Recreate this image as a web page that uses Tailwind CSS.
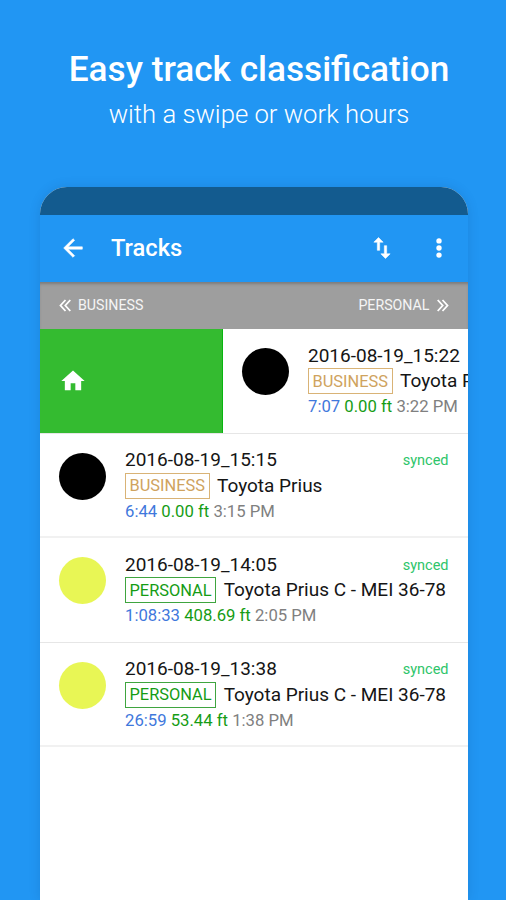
<!DOCTYPE html>
<html lang="en">
<head>
<meta charset="utf-8">
<title>Tracks</title>
<script src="https://cdn.jsdelivr.net/npm/@tailwindcss/browser@4"></script>
</head>
<body class="h-[900px] w-[506px] overflow-hidden bg-[#2196f3] font-['Roboto',sans-serif] whitespace-nowrap">
<header class="flex h-[187px] flex-col items-center pt-[47px] pl-[12px] text-white">
  <h1 class="text-[35.2px] leading-[44px] font-medium">Easy track classification</h1>
  <p class="mt-[7px] text-[25.7px] leading-[32px] font-light">with a swipe or work hours</p>
</header>
<main class="ml-[40px] flex h-[713px] w-[427.5px] flex-col overflow-hidden rounded-t-[27px] bg-white shadow-[0_0_12px_rgba(0,40,90,0.14)]">
  <div class="h-[28px] shrink-0 bg-[#135b8f]"></div>
  <div class="flex h-[67px] shrink-0 items-center bg-[#2196f3] pr-[15px] pl-[19px] text-white">
    <svg class="mb-[2px] size-[28px]" viewBox="0 0 24 24" fill="currentColor" stroke="currentColor" stroke-width="0.5"><path d="M20 11H7.83l5.59-5.59L12 4l-8 8 8 8 1.41-1.41L7.83 13H20v-2z"/></svg>
    <h2 class="ml-[24px] text-[23.7px] font-medium">Tracks</h2>
    <svg class="mb-px ml-auto h-[28px] w-[28px]" viewBox="0 0 24 24" fill="currentColor" stroke="currentColor" stroke-width="0.5"><path d="M16 17.01V10h-2v7.01h-3L15 21l4-3.99h-3zM9 3L5 6.99h3V14h2V6.99h3L9 3z"/></svg>
    <svg class="mb-[2px] ml-[29px] size-[28px]" viewBox="0 0 24 24" fill="currentColor"><circle cx="12" cy="5.9" r="2.3"/><circle cx="12" cy="12" r="2.3"/><circle cx="12" cy="18.1" r="2.3"/></svg>
  </div>
  <div class="flex h-[47px] shrink-0 items-center justify-between bg-[#9e9e9e] pt-px pr-[19px] pl-[19px] text-[14.2px] text-white/90 shadow-[inset_0_3px_3px_-1px_rgba(0,0,0,0.22)]">
    <span class="flex items-center gap-[7px]"><svg class="h-[13px] w-[12px]" viewBox="0 0 12 13" fill="none" stroke="white" stroke-width="1.8"><path d="M6.5 1 1.5 6.5l5 5.5M11.3 1l-5 5.5 5 5.5"/></svg>BUSINESS</span>
    <span class="flex items-center gap-[7px]">PERSONAL<svg class="h-[13px] w-[12px]" viewBox="0 0 12 13" fill="none" stroke="white" stroke-width="1.8"><path d="m.7 1 5 5.5-5 5.5M5.5 1l5 5.5-5 5.5"/></svg></span>
  </div>
  <section class="flex h-[104.5px] shrink-0 overflow-hidden border-b-[1.5px] border-[#e6e6e6]">
    <div class="flex w-[182.5px] shrink-0 items-center border-r border-[#08b510] bg-[#34bb30] pl-[19px] text-white"><svg class="size-[28px]" viewBox="0 0 24 24" fill="currentColor"><path d="M10 20v-6h4v6h5v-8h3L12 3 2 12h3v8z"/></svg></div>
    <div class="flex w-[427.5px] shrink-0 pt-[13.5px] pl-[19.5px]">
      <div class="mt-[5.5px] size-[47px] rounded-full bg-black"></div>
      <div class="ml-[19px] text-[19px] leading-[25.5px] text-[#151515]">
        <p>2016-08-19_15:22</p>
        <p class="flex items-center"><span class="flex h-[26px] items-center border-[1.5px] border-[#d9b376] px-[3.5px] pt-px text-[16.4px] text-[#cfa35e]">BUSINESS</span><span class="ml-[7.5px]">Toyota Prius</span></p>
        <p class="text-[16.7px] text-[#808080]"><span class="text-[#3f78dc]">7:07</span> <span class="text-[#159c15]">0.00 ft</span> 3:22 PM</p>
      </div>
    </div>
  </section>
  <section class="flex h-[104.5px] shrink-0 border-b-2 border-[#f1f1f1] pt-[13.5px] pr-[19px] pl-[19px]">
    <div class="mt-[5.5px] size-[47px] rounded-full bg-black"></div>
    <div class="ml-[19px] text-[19px] leading-[25.5px] text-[#151515]">
      <p>2016-08-19_15:15</p>
      <p class="flex items-center"><span class="flex h-[26px] items-center border-[1.5px] border-[#d9b376] px-[3.5px] pt-px text-[16.4px] text-[#cfa35e]">BUSINESS</span><span class="ml-[7.5px]">Toyota Prius</span></p>
      <p class="text-[16.7px] text-[#808080]"><span class="text-[#3f78dc]">6:44</span> <span class="text-[#159c15]">0.00 ft</span> 3:15 PM</p>
    </div>
    <span class="ml-auto w-0 text-[14.5px] leading-[27px] text-[#2ec56a]"><span class="float-right">synced</span></span>
  </section>
  <section class="flex h-[104.5px] shrink-0 border-b-[1.5px] border-[#e6e6e6] pt-[13.5px] pr-[19px] pl-[19px]">
    <div class="mt-[5.5px] size-[47px] rounded-full bg-[#e8f655]"></div>
    <div class="ml-[19px] text-[19px] leading-[25.5px] text-[#151515]">
      <p>2016-08-19_14:05</p>
      <p class="flex items-center"><span class="flex h-[26px] items-center border-[1.5px] border-[#3fa53f] px-[3.5px] pt-px text-[16.4px] text-[#159c15]">PERSONAL</span><span class="ml-[7.5px]">Toyota Prius C - MEI 36-78</span></p>
      <p class="text-[16.7px] text-[#808080]"><span class="text-[#3f78dc]">1:08:33</span> <span class="text-[#159c15]">408.69 ft</span> 2:05 PM</p>
    </div>
    <span class="ml-auto w-0 text-[14.5px] leading-[27px] text-[#2ec56a]"><span class="float-right">synced</span></span>
  </section>
  <section class="flex h-[104.5px] shrink-0 border-b-2 border-[#f1f1f1] pt-[13.5px] pr-[19px] pl-[19px]">
    <div class="mt-[5.5px] size-[47px] rounded-full bg-[#e8f655]"></div>
    <div class="ml-[19px] text-[19px] leading-[25.5px] text-[#151515]">
      <p>2016-08-19_13:38</p>
      <p class="flex items-center"><span class="flex h-[26px] items-center border-[1.5px] border-[#3fa53f] px-[3.5px] pt-px text-[16.4px] text-[#159c15]">PERSONAL</span><span class="ml-[7.5px]">Toyota Prius C - MEI 36-78</span></p>
      <p class="text-[16.7px] text-[#808080]"><span class="text-[#3f78dc]">26:59</span> <span class="text-[#159c15]">53.44 ft</span> 1:38 PM</p>
    </div>
    <span class="ml-auto w-0 text-[14.5px] leading-[27px] text-[#2ec56a]"><span class="float-right">synced</span></span>
  </section>
</main>
</body>
</html>
